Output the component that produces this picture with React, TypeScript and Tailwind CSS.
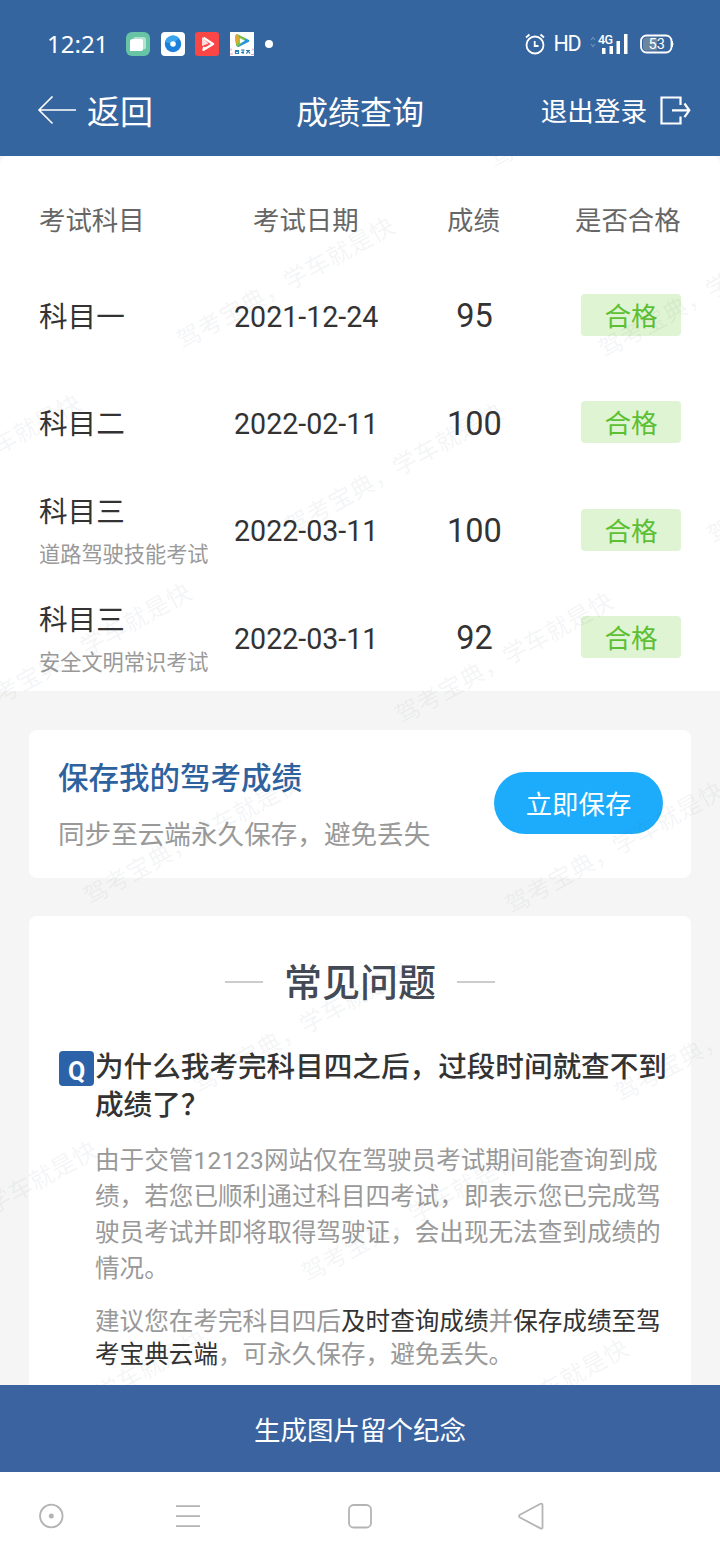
import type React from "react";

interface ExamResult {
  subject: string;
  detail?: string;
  date: string;
  score: number;
}

const results: ExamResult[] = [
  { subject: "科目一", date: "2021-12-24", score: 95 },
  { subject: "科目二", date: "2022-02-11", score: 100 },
  {
    subject: "科目三",
    detail: "道路驾驶技能考试",
    date: "2022-03-11",
    score: 100,
  },
  {
    subject: "科目三",
    detail: "安全文明常识考试",
    date: "2022-03-11",
    score: 92,
  },
];

// Centre of the first character of every watermark, relative to the content
const watermarks = [
  [500, 0],
  [188, 181],
  [610, 190],
  [-125, 358],
  [297, 367],
  [719, 376],
  [-15, 547],
  [407, 556],
  [95, 737],
  [517, 746],
  [204, 925],
  [626, 934],
  [-109, 1105],
  [313, 1114],
  [0, 1294],
  [422, 1303],
];

function Watermark() {
  return (
    <div className="pointer-events-none absolute inset-0 overflow-hidden">
      {watermarks.map(([x, y]) => (
        <span
          key={`${x}-${y}`}
          className="absolute origin-[12px_18px] rotate-[-29deg] text-[24px] leading-9 tracking-[0.5px] whitespace-nowrap text-[#5a6b70]/8"
          style={{ left: x - 11, top: y - 18 }}
        >
          驾考宝典，学车就是快
        </span>
      ))}
    </div>
  );
}

function StatusBar() {
  return (
    <div className="flex h-[66px] items-end justify-between pr-[46px] pl-[47px] text-white">
      <div className="flex h-11 items-center">
        <span className="w-[79px] font-['Noto_Sans',sans-serif] text-[24px] leading-none">
          12:21
        </span>
        <div className="flex items-center gap-[10.700px]">
          <svg width="24" height="24" viewBox="0 0 24 24">
            <rect width="24" height="24" rx="6" fill="#67c5a5" />
            <rect x="7" y="5" width="13" height="12.500" rx="2.500" fill="#b5e3d3" />
            <path d="M6.500 7H15a2 2 0 0 1 2 2v8a2 2 0 0 1-2 2H4V9.500A2.500 2.500 0 0 1 6.500 7z" fill="#fff" />
          </svg>
          <svg width="24" height="24" viewBox="0 0 24 24">
            <rect width="24" height="24" rx="4" fill="#fff" />
            <circle cx="12" cy="12" r="8.200" fill="#1b7fdc" />
            <path d="M4 10a8.200 8.200 0 0 1 14-4L12 12z" fill="#3aa4ef" />
            <circle cx="12" cy="12" r="2.800" fill="#fff" />
          </svg>
          <svg width="24" height="24" viewBox="0 0 24 24">
            <rect width="24" height="24" rx="3" fill="#fb4646" />
            <path d="M8.500 5.800L18 12l-9.500 5.800 1-2.800" fill="none" stroke="#fff" strokeWidth="2.400" strokeLinejoin="round" />
            <path d="M7 5v9l6.500-2.500z" fill="#ffd9d9" />
          </svg>
          <svg width="24" height="24" viewBox="0 0 24 24">
            <rect width="24" height="24" fill="#fff" />
            <path d="M5.500 4.500c0-2 1.500-2.300 3-1.500l10 4.700c1.200.6 1.200 1.600 0 2.200l-9.500 4.800c-2.500 1-3.500-2-3.500-10.200z" fill="#2596d8" />
            <path d="M5.500 4.500c0-2 1.500-2.300 3-1.500L16 6.600 8 14.800C6 14.500 5.500 11 5.500 4.500z" fill="#7fbf3f" />
            <path d="M5.500 4.500c0-2 1-2.200 2-1.900L9 6l-1.500 7c-1.500-1-2-4-2-8.500z" fill="#f0a52c" />
            <path d="M9.800 6v5.500l5.200-2.700z" fill="#fff" />
            <path d="M5 18.500h4M5.500 21.500v-2h3v2zM11 18h3.500M11 20.500h3M13 18v4M16 18.500h4M16.500 21.800l1.500-3 2 2.500" stroke="#2b7eb5" strokeWidth="1.200" fill="none" />
            <path d="M1 16.500v2M23 16.500v2M0 22h3M21 22.500h3" stroke="#e59ac0" strokeWidth="1.200" />
          </svg>
          <span className="size-2 rounded-full bg-white" />
        </div>
      </div>
      <div className="flex h-11 items-center">
        <svg width="20" height="22" viewBox="0 0 20 22" fill="none" stroke="#fff" strokeWidth="1.800">
          <circle cx="10" cy="12" r="8.500" />
          <path d="M9.700 8v5H13.500M1 4.500L4.500 1.500M19 4.500L15.500 1.500" />
        </svg>
        <span className="ml-[9px] font-['Roboto',sans-serif] text-[21.500px] leading-none tracking-[-1.500px]">
          HD
        </span>
        <svg className="ml-2.5" width="38" height="24" viewBox="0 0 38 24">
          <path d="M1 8l2-2.500L5 8M1 12l2 2.500L5 12" stroke="#6f91bf" strokeWidth="1.200" fill="none" />
          <text x="8" y="11.500" fontSize="12.500" fontWeight="500" fill="#fff" fontFamily="Roboto" textLength="15">
            4G
          </text>
          <path d="M12 16h3.500v6H12zM19.500 14H23v8h-3.500zM26.500 9H30v13h-3.500zM34 2h3.500v20H34z" fill="#fff" />
        </svg>
        <svg className="ml-3" width="34" height="20" viewBox="0 0 34 20">
          <rect x="1" y="1.500" width="30.500" height="17" rx="5.500" fill="none" stroke="#fff" strokeWidth="1.800" />
          <path d="M6 3.500h11v13H6q-3-.5-3-3v-7q0-2.500 3-3z" fill="#6c86a0" />
          <path d="M32 7q2 3 0 6z" fill="#fff" stroke="#fff" />
          <text x="8.500" y="15" fontSize="14.500" fill="#fff" fontFamily="Roboto">
            53
          </text>
        </svg>
      </div>
    </div>
  );
}

function Header() {
  return (
    <header className="h-[156px] shrink-0 bg-[#35659f] text-white">
      <StatusBar />
      <div className="grid h-[90px] grid-cols-[1fr_auto_1fr] items-center">
        <button className="flex items-center pl-[37px] text-[33px] leading-none">
          <svg width="40" height="30" viewBox="0 0 40 30" fill="none" stroke="#fff" strokeWidth="1.600">
            <path d="M39 14H2M15.500 0.500L2 14l13.500 13.500" />
          </svg>
          <span className="ml-2.5 pt-0.5">返回</span>
        </button>
        <h1 className="pt-[3px] text-[32px] leading-none">成绩查询</h1>
        <button className="flex items-center justify-end pr-[29px] text-[26.600px] leading-none">
          <span className="pt-[3px]">退出登录</span>
          <svg className="ml-3" width="32" height="30" viewBox="0 0 32 30" fill="none" stroke="#fff" strokeWidth="2.200">
            <path d="M21.500 9V1.500H2.500v26h19v-7M13 14.300h17M25.500 7.500l4.800 6.800-4.800 6.800" />
          </svg>
        </button>
      </div>
    </header>
  );
}

function ResultRow({ subject, detail, date, score }: ExamResult) {
  return (
    <div className="grid h-[107.300px] grid-cols-[195px_144px_191px_1fr] items-center text-[#333]">
      <div className={detail ? "pt-[7px]" : "pt-[3px]"}>
        <div className="text-[28.600px] leading-[42px] whitespace-nowrap">
          {subject}
        </div>
        {detail && (
          <div className="text-[21.200px] leading-[43px] whitespace-nowrap text-[#999]">
            {detail}
          </div>
        )}
      </div>
      <div className="pt-[3px] text-[28.600px] whitespace-nowrap">{date}</div>
      <div className="pt-0.5 pl-0.5 text-center text-[32.500px]">{score}</div>
      <div className="-mt-[1px] ml-[12px] h-[42px] w-[100px] rounded bg-[#dff4d2] text-center text-[26.600px] leading-[45px] text-[#5dbf33]">
        合格
      </div>
    </div>
  );
}

function Results() {
  return (
    <section className="h-[535px] rounded-t-lg bg-white pl-[39px]">
      <div className="flex h-[106px] items-center pt-[26px] text-[26.400px] text-[#666]">
        <span className="w-[214px]">考试科目</span>
        <span className="w-[194px]">考试日期</span>
        <span className="w-[128px]">成绩</span>
        <span>是否合格</span>
      </div>
      {results.map((result) => (
        <ResultRow key={`${result.subject}-${result.detail}`} {...result} />
      ))}
    </section>
  );
}

function SaveCard() {
  return (
    <section className="mx-[29px] mt-[39px] flex h-[148px] items-center justify-between rounded-lg bg-white pr-[28px] pl-[29px]">
      <div className="pt-[6px]">
        <h2 className="text-[30.500px] leading-[56px] font-medium text-[#2e629f]">
          保存我的驾考成绩
        </h2>
        <p className="text-[26.600px] leading-[56px] text-[#999]">
          同步至云端永久保存，避免丢失
        </p>
      </div>
      <button className="-mt-[2px] h-[62px] w-[169px] rounded-full bg-[#1dacfc] pt-[5px] text-[26.400px] text-white">
        立即保存
      </button>
    </section>
  );
}

function Strong({ children }: { children: React.ReactNode }) {
  return <span className="text-[#333]">{children}</span>;
}

function Faq() {
  return (
    <section className="mx-[29px] mt-[38px] h-[600px] rounded-lg bg-white">
      <div className="flex items-center justify-center gap-[21px] pt-[37px]">
        <span className="h-0.5 w-[38px] bg-[#ccc]" />
        <h2 className="pt-[3px] text-[38px] leading-[55px] font-medium text-[#444a55]">
          常见问题
        </h2>
        <span className="h-0.5 w-[38px] bg-[#ccc]" />
      </div>
      <div className="mt-[37px] flex pl-[30px]">
        <div className="mt-[3px] flex h-[35px] w-[35px] shrink-0 items-center justify-center rounded bg-[#2c63a8] pt-1.5 text-[25px] leading-none font-bold text-white">
          Q
        </div>
        <div className="w-[576px] pl-px">
          <h3 className="text-[28.600px] leading-[38px] font-medium text-[#333]">
            为什么我考完科目四之后，过段时间就查不到成绩了？
          </h3>
          <p className="mt-[19px] text-[24.600px] leading-9 text-[#999]">
            由于交管<span className="tracking-[0.3px]">12123</span>
            网站仅在驾驶员考试期间能查询到成绩，若您已顺利通过科目四考试，即表示您已完成驾驶员考试并即将取得驾驶证，会出现无法查到成绩的情况。
          </p>
          <p className="mt-[18px] text-[24.600px] leading-[33px] text-[#999]">
            建议您在考完科目四后<Strong>及时查询成绩</Strong>并
            <Strong>保存成绩至驾考宝典云端</Strong>，可永久保存，避免丢失。
          </p>
        </div>
      </div>
    </section>
  );
}

function NavigationBar() {
  return (
    <nav className="flex h-[88px] shrink-0 items-center bg-white pl-[38px]">
      <svg width="508" height="28" viewBox="0 0 508 28" fill="none" stroke="#b4b4b4" strokeWidth="1.800">
        <circle cx="13.300" cy="14" r="11.300" />
        <circle cx="13.300" cy="14" r="2.500" fill="#b4b4b4" stroke="none" />
        <path d="M138 4.200h24M138 14.200h24M138 24.200h24" />
        <rect x="311" y="3" width="22" height="22.500" rx="4.500" />
        <path d="M502.500 1.800c1-.6 2 0 2 1v22.600c0 1-1 1.600-2 1L482 15.500c-1.300-.8-1.300-2 0-2.800z" />
      </svg>
    </nav>
  );
}

export default function App() {
  return (
    <div
      lang="zh-CN"
      className="flex h-[1560px] w-[720px] flex-col overflow-hidden bg-white font-['Roboto','Noto_Sans_CJK_SC',sans-serif]"
    >
      <Header />
      <main className="relative h-[1229px] shrink-0 overflow-hidden bg-[#f5f5f5]">
        <Results />
        <SaveCard />
        <Faq />
        <Watermark />
      </main>
      <button className="h-[87px] shrink-0 bg-[#3b63a0] pt-1 text-[26.500px] text-white">
        生成图片留个纪念
      </button>
      <NavigationBar />
    </div>
  );
}
